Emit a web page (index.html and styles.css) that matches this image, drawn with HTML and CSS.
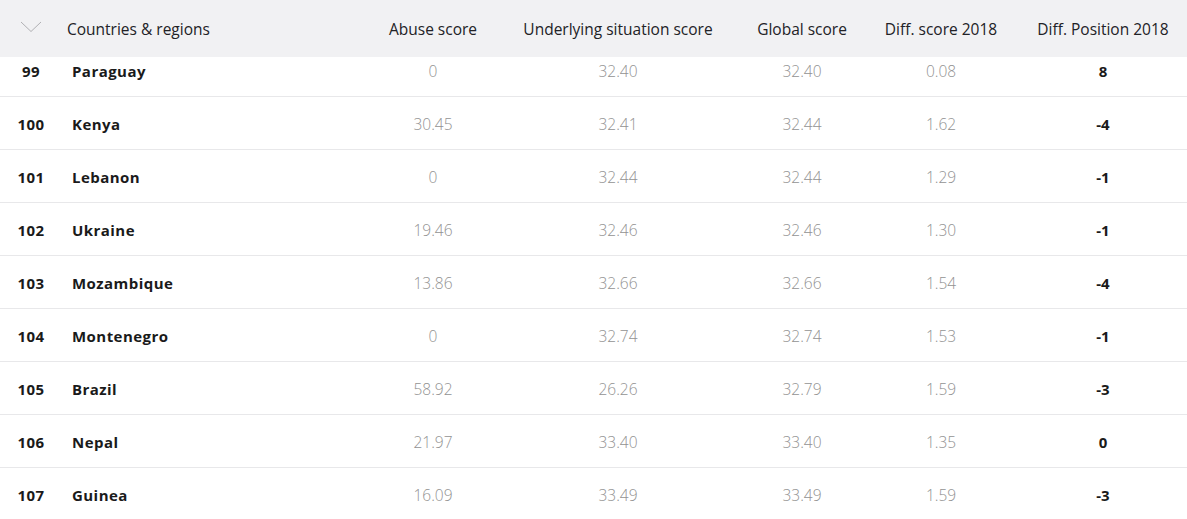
FILE: index.html
```html
<!DOCTYPE html>
<html>
<head>
<meta charset="utf-8">
<link rel="stylesheet" href="styles.css">
</head>
<body>
<div class="table">
  <div class="head row-grid">
    <div class="cell chev"><svg width="22" height="12" viewBox="0 0 22 12"><polyline points="1,1 11,10.5 21,1" fill="none" stroke="#a8a8ac" stroke-width="0.9"/></svg></div>
    <div class="cell hname">Countries &amp; regions</div>
    <div class="cell c">Abuse score</div>
    <div class="cell c">Underlying situation score</div>
    <div class="cell c">Global score</div>
    <div class="cell c">Diff. score 2018</div>
    <div class="cell c last">Diff. Position 2018</div>
  </div>
  <div class="body">
    <div class="row row-grid first"><div class="cell num">99</div><div class="cell name">Paraguay</div><div class="cell c val">0</div><div class="cell c val">32.40</div><div class="cell c val">32.40</div><div class="cell c val">0.08</div><div class="cell c last pos">8</div></div>
    <div class="row row-grid"><div class="cell num">100</div><div class="cell name">Kenya</div><div class="cell c val">30.45</div><div class="cell c val">32.41</div><div class="cell c val">32.44</div><div class="cell c val">1.62</div><div class="cell c last pos">-4</div></div>
    <div class="row row-grid"><div class="cell num">101</div><div class="cell name">Lebanon</div><div class="cell c val">0</div><div class="cell c val">32.44</div><div class="cell c val">32.44</div><div class="cell c val">1.29</div><div class="cell c last pos">-1</div></div>
    <div class="row row-grid"><div class="cell num">102</div><div class="cell name">Ukraine</div><div class="cell c val">19.46</div><div class="cell c val">32.46</div><div class="cell c val">32.46</div><div class="cell c val">1.30</div><div class="cell c last pos">-1</div></div>
    <div class="row row-grid"><div class="cell num">103</div><div class="cell name">Mozambique</div><div class="cell c val">13.86</div><div class="cell c val">32.66</div><div class="cell c val">32.66</div><div class="cell c val">1.54</div><div class="cell c last pos">-4</div></div>
    <div class="row row-grid"><div class="cell num">104</div><div class="cell name">Montenegro</div><div class="cell c val">0</div><div class="cell c val">32.74</div><div class="cell c val">32.74</div><div class="cell c val">1.53</div><div class="cell c last pos">-1</div></div>
    <div class="row row-grid"><div class="cell num">105</div><div class="cell name">Brazil</div><div class="cell c val">58.92</div><div class="cell c val">26.26</div><div class="cell c val">32.79</div><div class="cell c val">1.59</div><div class="cell c last pos">-3</div></div>
    <div class="row row-grid"><div class="cell num">106</div><div class="cell name">Nepal</div><div class="cell c val">21.97</div><div class="cell c val">33.40</div><div class="cell c val">33.40</div><div class="cell c val">1.35</div><div class="cell c last pos">0</div></div>
    <div class="row row-grid"><div class="cell num">107</div><div class="cell name">Guinea</div><div class="cell c val">16.09</div><div class="cell c val">33.49</div><div class="cell c val">33.49</div><div class="cell c val">1.59</div><div class="cell c last pos">-3</div></div>
  </div>
</div>
</body>
</html>
```

FILE: styles.css
```css
html, body {
  margin: 0;
  padding: 0;
  background: #ffffff;
  overflow: hidden;
}
body {
  font-family: "Open Sans", "Liberation Sans", sans-serif;
  width: 1187px;
  height: 519px;
}
.table {
  width: 1187px;
}
.row-grid {
  display: grid;
  grid-template-columns: 62px 304px 134px 236px 132px 146px 173px;
  align-items: center;
}
.head {
  position: relative;
  z-index: 2;
  height: 57px;
  background: #f1f1f3;
  color: #222226;
  font-size: 15.5px;
  font-weight: 400;
}
.cell.c {
  text-align: center;
}
.cell.last {
  padding-left: 5px;
}
.chev {
  display: flex;
  justify-content: center;
  margin-top: -3px;
}
.hname {
  padding-left: 5px;
}
.row {
  height: 50px;
  padding-top: 2px;
  border-bottom: 1px solid #e8e8ea;
}
.row.first {
  margin-top: -13px;
  position: relative;
  z-index: 1;
}
.num {
  text-align: center;
  font-weight: 700;
  font-size: 15px;
  color: #1a1a1a;
  letter-spacing: 0.4px;
}
.name {
  padding-left: 10px;
  font-weight: 700;
  font-size: 15px;
  color: #1a1a1a;
  letter-spacing: 0.45px;
}
.val {
  font-weight: 300;
  font-size: 15.5px;
  color: #929292;
}
.pos {
  font-weight: 700;
  font-size: 15px;
  color: #1a1a1a;
}
```
